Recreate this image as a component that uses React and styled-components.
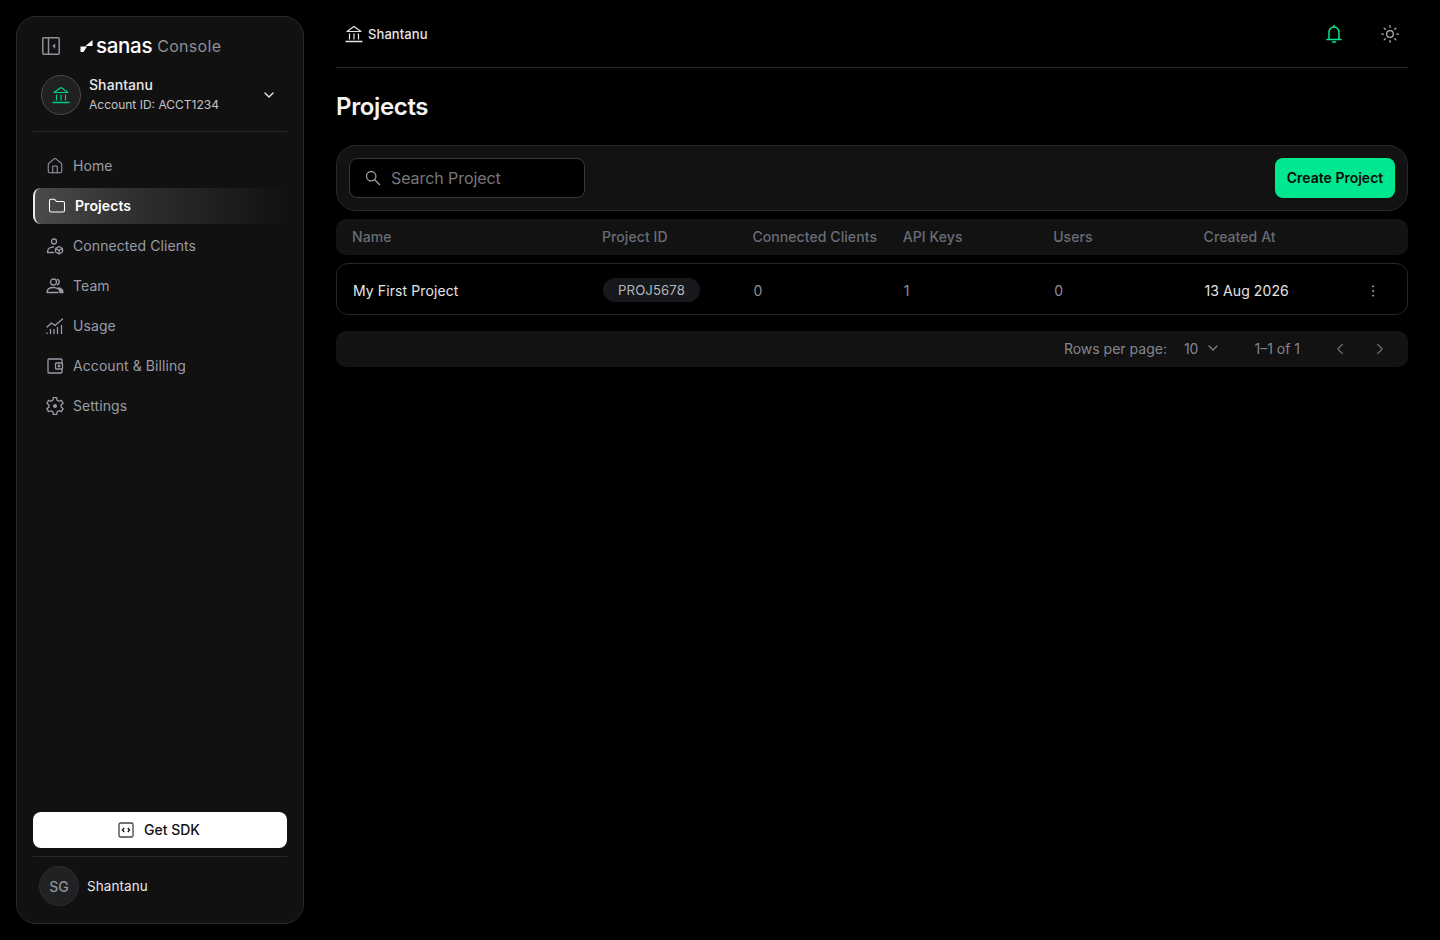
import React from "react";
import styled, { createGlobalStyle } from "styled-components";
import { ChevronDown, ChevronLeft, ChevronRight, EllipsisVertical, Sun, House, Folder } from "lucide-react";

const GlobalStyle = createGlobalStyle`
  * { box-sizing: border-box; }
  html, body { margin: 0; padding: 0; background: #000; }
  body {
    font-family: Inter, "Noto Sans", sans-serif;
    color: #fff;
    -webkit-font-smoothing: antialiased;
    letter-spacing: 0.08px;
  }
`;

const Page = styled.div`
  display: flex;
  height: 940px;
  padding: 16px 32px 16px 16px;
  gap: 32px;
  overflow: hidden;
`;
const Sidebar = styled.aside`
  width: 288px;
  flex: none;
  height: 908px;
  background: #111112;
  border: 1px solid #2a2a2c;
  border-radius: 20px;
  padding: 16px;
  display: flex;
  flex-direction: column;
`;
const BrandRow = styled.div`
  display: flex;
  align-items: center;
  height: 26px;
  padding-left: 8px;
`;
const CollapseIcon = styled.svg`
  width: 20px;
  height: 20px;
  margin-right: 19px;
  flex: none;
`;
const Wordmark = styled.span`
  font-size: 20.5px;
  font-weight: 500;
  letter-spacing: -0.3px;
  color: #fff;
  margin-left: 3px;
  margin-bottom: 2px;
`;
const ConsoleText = styled.span`
  font-size: 16px;
  font-weight: 400;
  letter-spacing: 0.3px;
  color: #8f8f94;
  margin-left: 5px;
`;
const AccountRow = styled.div`
  display: flex;
  align-items: center;
  height: 56px;
  margin-top: 8px;
  margin-bottom: 8px;
  padding: 0 10px 0 8px;
`;
const AccountAvatar = styled.div`
  width: 40px;
  height: 40px;
  border-radius: 50%;
  background: #202123;
  border: 1px solid #4a4a4d;
  color: #00d07e;
  display: flex;
  align-items: center;
  justify-content: center;
  flex: none;
`;
const AccountInfo = styled.div`
  margin: 0 0 2px 8px;
  flex: 1;
`;
const AccountName = styled.div`
  font-size: 14px;
  line-height: 20px;
  font-weight: 500;
  color: #e8e8ea;
`;
const AccountId = styled.div`
  font-size: 12px;
  line-height: 18px;
  margin-top: 1px;
  letter-spacing: 0;
  color: #c4c4c8;
`;
const Divider = styled.div`
  height: 1px;
  background: #29292b;
  flex: none;
`;
const Nav = styled.nav`
  display: flex;
  flex-direction: column;
  gap: 4px;
  margin-top: 16px;
  flex: 1;
`;
const NavItem = styled.a`
  display: flex;
  align-items: center;
  height: 36px;
  gap: 9px;
  padding: 0 0 2px 13px;
  font-size: 14px;
  font-weight: ${(p) => (p.$active ? 600 : 400)};
  color: ${(p) => (p.$active ? "#fff" : "#9a9ca5")};
  border-radius: 8px;
  border-left: ${(p) => (p.$active ? "2px solid #e8e8e8" : "0")};
  background: ${(p) => (p.$active ? "linear-gradient(90deg, #4a4a4a 0%, #2f2f2f 40%, #111112 100%)" : "transparent")};

  & > svg {
    margin-top: 2px;
  }
`;
const NavGlyph = styled.svg`
  width: 18px;
  height: 18px;
  flex: none;
`;
const SdkButton = styled.button`
  height: 36px;
  padding: 0 2px 1px 0;
  background: #fff;
  color: #111;
  border: 0;
  border-radius: 8px;
  font-family: inherit;
  font-size: 14px;
  font-weight: 500;
  display: flex;
  align-items: center;
  justify-content: center;
  gap: 10px;
  margin-bottom: 8px;
  flex: none;
`;
const UserRow = styled.div`
  display: flex;
  align-items: center;
  gap: 8px;
  padding: 9px 6px 1px;
`;
const UserAvatar = styled.div`
  width: 40px;
  height: 40px;
  border-radius: 50%;
  background: #202123;
  border: 1px solid #2c2d30;
  color: #8f9199;
  font-size: 14px;
  font-weight: 500;
  display: flex;
  align-items: center;
  justify-content: center;
`;
const UserName = styled.span`
  font-size: 13.5px;
  color: #e8e8ea;
`;
const Main = styled.main`
  flex: 1;
  min-width: 0;
  margin-top: -16px;
`;
const TopBar = styled.header`
  height: 68px;
  border-bottom: 1px solid #29292b;
  display: flex;
  align-items: center;
  justify-content: space-between;
  padding: 0 0 0 8px;
`;
const Crumb = styled.div`
  display: flex;
  align-items: center;
  gap: 4px;
  font-size: 13px;
  font-weight: 500;
  color: #e4e4e6;
`;
const TopIcons = styled.div`
  display: flex;
  align-items: center;
  gap: 36px;
  padding-right: 8px;
`;
const Title = styled.h1`
  font-size: 24px;
  line-height: 32px;
  font-weight: 600;
  letter-spacing: -0.35px;
  margin: 23px 0 22px;
  color: #f4f4f5;
`;
const Toolbar = styled.div`
  height: 66px;
  background: #121213;
  border: 1px solid #2a2a2c;
  border-radius: 20px;
  padding: 0 12px;
  display: flex;
  align-items: center;
  justify-content: space-between;
`;
const SearchBox = styled.div`
  width: 236px;
  height: 40px;
  background: #000;
  border: 1px solid #38383b;
  border-radius: 8px;
  display: flex;
  align-items: center;
  gap: 9px;
  padding-left: 14px;
  color: #a0a0a5;
`;
const SearchText = styled.span`
  font-size: 16px;
  letter-spacing: -0.07px;
  color: #77777c;
`;
const CreateButton = styled.button`
  width: 120px;
  height: 40px;
  padding: 0 0 1px;
  background: #00e88f;
  color: #0a0a0a;
  border: 0;
  border-radius: 8px;
  font-family: inherit;
  font-size: 14px;
  font-weight: 600;
`;
const gridColumns = "250px 150.4px 150.4px 150.4px 150.4px 1fr";
const TableHead = styled.div`
  display: grid;
  grid-template-columns: ${gridColumns};
  align-items: center;
  height: 36px;
  margin-top: 8px;
  padding: 0 16px 2px;
  background: #121213;
  border-radius: 10px;
  font-size: 14px;
  font-weight: 500;
  color: #696d76;
`;
const TableRow = styled.div`
  display: grid;
  grid-template-columns: ${gridColumns};
  align-items: center;
  height: 52px;
  margin-top: 8px;
  padding: 3px 26px 0 16px;
  border: 1px solid #262628;
  border-radius: 12px;
  font-size: 14px;
`;
const CellName = styled.span`
  color: #e4e4e6;
  font-weight: 400;
  letter-spacing: 0.1px;
`;
const CellNum = styled.span`
  color: #8e9098;
`;
const CellDate = styled.div`
  display: flex;
  align-items: center;
  justify-content: space-between;
  color: #e4e4e6;
`;
const IdPill = styled.span`
  justify-self: start;
  width: 97px;
  height: 24px;
  margin-top: -2px;
  border-radius: 12px;
  background: #16181b;
  color: #b4b6bc;
  display: flex;
  align-items: center;
  justify-content: center;
  font-size: 13.2px;
`;
const Pager = styled.div`
  height: 36px;
  margin-top: 16px;
  padding: 0 19px 2px 0;
  background: #121213;
  border-radius: 10px;
  display: flex;
  align-items: center;
  justify-content: flex-end;
  font-size: 14px;
  letter-spacing: 0;
  color: #84868e;
`;
const RowsValue = styled.div`
  display: flex;
  align-items: center;
  gap: 7px;
  margin-left: 17px;
  margin-right: 33px;
`;
const PagerArrows = styled.div`
  display: flex;
  align-items: center;
  gap: 22px;
  margin: 2px 0 0 31px;
  color: #6a6c73;
`;

const LogoMark = () => (
  <svg width="13" height="12" viewBox="0 0 13 12">
    <path d="M0.500 12V6.500H7L3.500 12zM12.500 0V6H5.500z" fill="#fff" />
  </svg>
);

const BankIcon = ({ size }) => (
  <svg width={size} height={size} viewBox="0 0 20 20" fill="none" stroke="currentColor" strokeWidth="1.200" strokeLinejoin="round">
    <path d="M3 7.500L10 2.500l7 5z" />
    <path d="M5.500 9.500v6M10 9.500v6M14.500 9.500v6" />
    <path d="M1.500 17.500h17" strokeWidth="1.500" />
  </svg>
);

const BellIcon = () => (
  <svg width="20" height="20" viewBox="0 0 20 20" fill="none" stroke="#00e88f" strokeWidth="1.500" strokeLinecap="round">
    <path d="M5 15V8a5 5 0 0 1 10 0v7" />
    <path d="M3 15.500h14M10 1.500v1.500M8.500 18h3" />
  </svg>
);

// six-tooth cog outline, computed so the teeth stay even
const cogPath = (() => {
  const pts = [];
  for (let i = 0; i < 6; i++) {
    const a = (i * Math.PI) / 3 - Math.PI / 2;
    [[-0.2, 8.6], [0.2, 8.6], [0.34, 6.2], [0.7, 6.2]].forEach(([d, r]) => {
      pts.push(`${(9 + r * Math.cos(a + d)).toFixed(2)} ${(9 + r * Math.sin(a + d)).toFixed(2)}`);
    });
  }
  return `M${pts.join("L")}z`;
})();

const icon = { fill: "none", stroke: "currentColor", strokeWidth: 1.3, strokeLinecap: "round", strokeLinejoin: "round", viewBox: "0 0 18 18" };

const App = () => (
  <Page>
    <GlobalStyle />
    <Sidebar>
      <BrandRow>
        <CollapseIcon viewBox="0 0 20 20" fill="none" stroke="#8f929b" strokeWidth="1.500">
          <rect x="1.800" y="1.800" width="16.400" height="16.400" rx="1" />
          <path d="M7.500 2v16" />
          <path d="M14 7.800v4.400L11.600 10z" fill="#8f929b" strokeWidth="0.500" />
        </CollapseIcon>
        <LogoMark />
        <Wordmark>sanas</Wordmark>
        <ConsoleText>Console</ConsoleText>
      </BrandRow>
      <AccountRow>
        <AccountAvatar>
          <BankIcon size={20} />
        </AccountAvatar>
        <AccountInfo>
          <AccountName>Shantanu</AccountName>
          <AccountId>Account ID: ACCT1234</AccountId>
        </AccountInfo>
        <ChevronDown size={16} color="#e8e8ea" />
      </AccountRow>
      <Divider />
      <Nav>
        <NavItem>
          <House size={18} strokeWidth={1.400} />
          Home
        </NavItem>
        <NavItem $active>
          <Folder size={18} strokeWidth={1.400} />
          Projects
        </NavItem>
        <NavItem>
          <NavGlyph {...icon}>
            <circle cx="8" cy="4.500" r="2.500" />
            <path d="M1.500 15c0-3 2.500-5 6-5" />
            <path d="M1.500 15.500h6" />
            <path d="M13 9.500l3.500 2v3.500L13 17l-3.500-2v-3.500zM9.500 11.500L13 13.300l3.500-1.800M13 13.300V17" />
          </NavGlyph>
          Connected Clients
        </NavItem>
        <NavItem>
          <NavGlyph {...icon}>
            <circle cx="7.500" cy="5" r="3" />
            <path d="M1 15.500c0-3 2.500-5 6.500-5 2 0 3.500.5 4.500 1.400M1 15.500h11" />
            <path d="M11.500 2.300a3 3 0 0 1 0 5.400" strokeWidth="1.500" />
            <path d="M12.500 10.800c2.500.3 4.500 2 4.500 4.700h-3z" fill="currentColor" />
          </NavGlyph>
          Team
        </NavItem>
        <NavItem>
          <NavGlyph {...icon}>
            <path d="M1 10l4.500-4 3.500 2.500L16.500 2" />
            <path d="M1 16.500v-.5M4.500 16.500v-4M8 16.500v-4M11.500 16.500v-6M15.500 16.500v-8" />
          </NavGlyph>
          Usage
        </NavItem>
        <NavItem>
          <NavGlyph {...icon}>
            <path d="M16 5.500V3a1 1 0 0 0-1-1H3a1 1 0 0 0-1 1v12a1 1 0 0 0 1 1h12a1 1 0 0 0 1-1v-2.500" />
            <rect x="9.500" y="6" width="7" height="6" rx="1" />
            <circle cx="13" cy="9" r="0.800" />
          </NavGlyph>
          Account &amp; Billing
        </NavItem>
        <NavItem>
          <NavGlyph {...icon}>
            <path d={cogPath} strokeWidth="1.300" />
            <circle cx="9" cy="9" r="2" fill="currentColor" stroke="none" />
          </NavGlyph>
          Settings
        </NavItem>
      </Nav>
      <SdkButton>
        <svg width="16" height="16" viewBox="0 0 16 16" fill="none" stroke="#444" strokeWidth="1.300">
          <rect x="1" y="1" width="14" height="14" rx="1.500" />
          <path d="M6.200 6L4.500 8l1.700 2M9.800 6l1.700 2-1.700 2" stroke="#111" />
        </svg>
        Get SDK
      </SdkButton>
      <Divider />
      <UserRow>
        <UserAvatar>SG</UserAvatar>
        <UserName>Shantanu</UserName>
      </UserRow>
    </Sidebar>
    <Main>
      <TopBar>
        <Crumb>
          <BankIcon size={20} />
          Shantanu
        </Crumb>
        <TopIcons>
          <BellIcon />
          <Sun size={20} color="#b4b6bc" strokeWidth={1.500} />
        </TopIcons>
      </TopBar>
      <Title>Projects</Title>
      <Toolbar>
        <SearchBox>
          <svg width="18" height="18" viewBox="0 0 18 18" fill="none" stroke="currentColor" strokeWidth="1.300">
            <circle cx="7.200" cy="7.200" r="4.700" />
            <path d="M10.700 10.700L16 16" />
          </svg>
          <SearchText>Search Project</SearchText>
        </SearchBox>
        <CreateButton>Create Project</CreateButton>
      </Toolbar>
      <TableHead>
        <span>Name</span>
        <span>Project ID</span>
        <span>Connected Clients</span>
        <span>API Keys</span>
        <span>Users</span>
        <span>Created At</span>
      </TableHead>
      <TableRow>
        <CellName>My First Project</CellName>
        <IdPill>PROJ5678</IdPill>
        <CellNum>0</CellNum>
        <CellNum>1</CellNum>
        <CellNum>0</CellNum>
        <CellDate>
          13 Aug 2026
          <EllipsisVertical size={16} color="#9a9ca5" strokeWidth={1.500} />
        </CellDate>
      </TableRow>
      <Pager>
        <span>Rows per page:</span>
        <RowsValue>
          10
          <ChevronDown size={16} strokeWidth={1.800} />
        </RowsValue>
        <span>1–1 of 1</span>
        <PagerArrows>
          <ChevronLeft size={18} strokeWidth={1.800} />
          <ChevronRight size={18} strokeWidth={1.800} />
        </PagerArrows>
      </Pager>
    </Main>
  </Page>
);

export default App;
